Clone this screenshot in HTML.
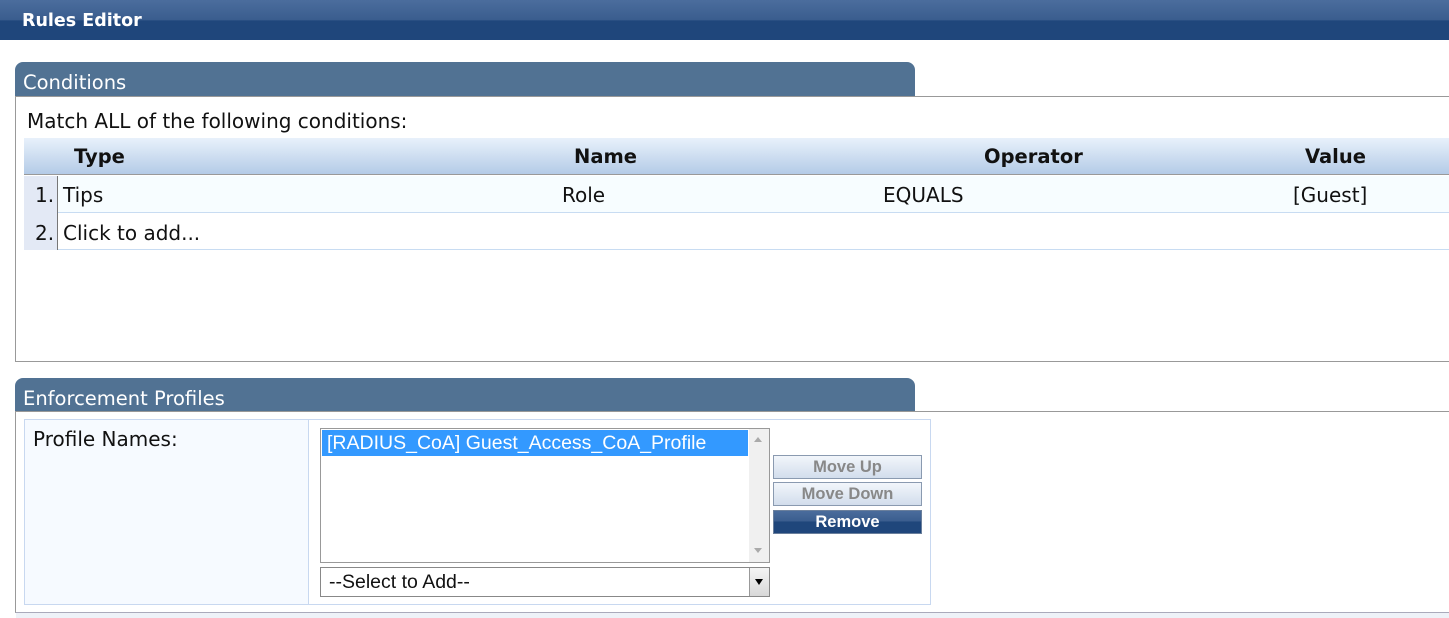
<!DOCTYPE html>
<html><head><style>
*{margin:0;padding:0;box-sizing:border-box}
body{width:1449px;height:618px;overflow:hidden;background:#fff;font-family:"DejaVu Sans",Verdana,sans-serif;position:relative;color:#111}
.abs{position:absolute}
.hdr{left:0;top:0;width:1449px;height:40px;background:linear-gradient(#4b6d9d,#3a5d8e 50%,#1f467b 52%,#1f467b);}
.hdr span{position:absolute;left:22px;top:11px;color:#fff;font-weight:bold;font-size:17.5px}
.tab{background:#517293;border-radius:8px 8px 0 0;color:#fff;font-size:19.5px;padding:9px 0 0 8px}
.box{border:1px solid #999;border-right:none}
.th{font-weight:bold;font-size:19.5px}
.td{font-size:20px}
.btn{left:773px;width:149px;height:24px;border:1px solid #8a9ab0;background:linear-gradient(#f2f6fb,#d2ddec);color:#888;font-weight:bold;font-size:16.5px;text-align:center;line-height:22px;font-family:"Liberation Sans",Arial,sans-serif}
</style></head><body>
<div class="abs hdr"><span>Rules Editor</span></div>

<div class="abs tab" style="left:15px;top:62px;width:900px;height:34px">Conditions</div>
<div class="abs box" style="left:15px;top:96px;width:1434px;height:266px"></div>
<div class="abs td" style="left:27px;top:109px">Match ALL of the following conditions:</div>
<div class="abs" style="left:24px;top:138px;width:1425px;height:37px;background:linear-gradient(#e8f1fb,#b4cbe7);border-bottom:1px solid #999"></div>
<div class="abs th" style="left:74px;top:145px">Type</div>
<div class="abs th" style="left:574px;top:145px">Name</div>
<div class="abs th" style="left:984px;top:145px">Operator</div>
<div class="abs th" style="left:1305px;top:145px">Value</div>
<div class="abs" style="left:24px;top:176px;width:1425px;height:37px;background:#f7fdff;border-bottom:1px solid #c8dcf2"></div>
<div class="abs" style="left:24px;top:213px;width:1425px;height:37px;background:#fff;border-bottom:1px solid #c8dcf2"></div>
<div class="abs" style="left:24px;top:176px;width:34px;height:74px;background:#e3e9f5;border-right:1px solid #777"></div>
<div class="abs td" style="left:35px;top:183px">1.</div>
<div class="abs td" style="left:63px;top:183px">Tips</div>
<div class="abs td" style="left:562px;top:183px">Role</div>
<div class="abs td" style="left:883px;top:183px">EQUALS</div>
<div class="abs td" style="left:1293px;top:183px">[Guest]</div>
<div class="abs td" style="left:35px;top:221px">2.</div>
<div class="abs td" style="left:63px;top:221px">Click to add...</div>

<div class="abs tab" style="left:15px;top:378px;width:900px;height:34px">Enforcement Profiles</div>
<div class="abs box" style="left:15px;top:411px;width:1434px;height:202px;border-bottom:1px solid #aab"></div>
<div class="abs" style="left:16px;top:613px;width:1433px;height:5px;background:#eef2f8"></div>
<div class="abs" style="left:24px;top:419px;width:907px;height:186px;border:1px solid #c8d8f0"></div>
<div class="abs" style="left:25px;top:420px;width:284px;height:184px;background:#f6faff;border-right:1px solid #c8d8f0"></div>
<div class="abs td" style="left:33px;top:427px">Profile Names:</div>
<div class="abs" style="left:320px;top:428px;width:450px;height:135px;border:1px solid #999;background:#fff"></div>
<div class="abs" style="left:322px;top:430px;width:426px;height:26px;background:#3399ff;color:#fff;font-family:'Liberation Sans',Arial,sans-serif;font-size:19.5px;padding:2px 0 0 5px">[RADIUS_CoA] Guest_Access_CoA_Profile</div>
<div class="abs" style="left:749px;top:429px;width:20px;height:133px;background:#f0f0f0"></div>
<div class="abs" style="left:754px;top:437px;width:0;height:0;border:4px solid transparent;border-bottom:5px solid #aaa;border-top:none"></div>
<div class="abs" style="left:754px;top:548px;width:0;height:0;border:4px solid transparent;border-top:5px solid #aaa;border-bottom:none"></div>
<div class="abs" style="left:320px;top:567px;width:450px;height:30px;border:1px solid #888;background:#fff;font-family:'Liberation Sans',Arial,sans-serif;font-size:19.5px;padding:3px 0 0 8px">--Select to Add--</div>
<div class="abs" style="left:749px;top:568px;width:20px;height:28px;background:linear-gradient(#f5f5f5,#d8d8d8);border-left:1px solid #999"></div>
<div class="abs" style="left:755px;top:579px;width:0;height:0;border:4px solid transparent;border-top:6px solid #000;border-bottom:none"></div>
<div class="abs btn" style="top:455px">Move Up</div>
<div class="abs btn" style="top:482px">Move Down</div>
<div class="abs btn" style="top:510px;background:linear-gradient(#4a6c9c,#3b5e8f 45%,#1f467b 50%,#1f467b);color:#fff;border-color:#6a7f9c">Remove</div>
</body></html>
